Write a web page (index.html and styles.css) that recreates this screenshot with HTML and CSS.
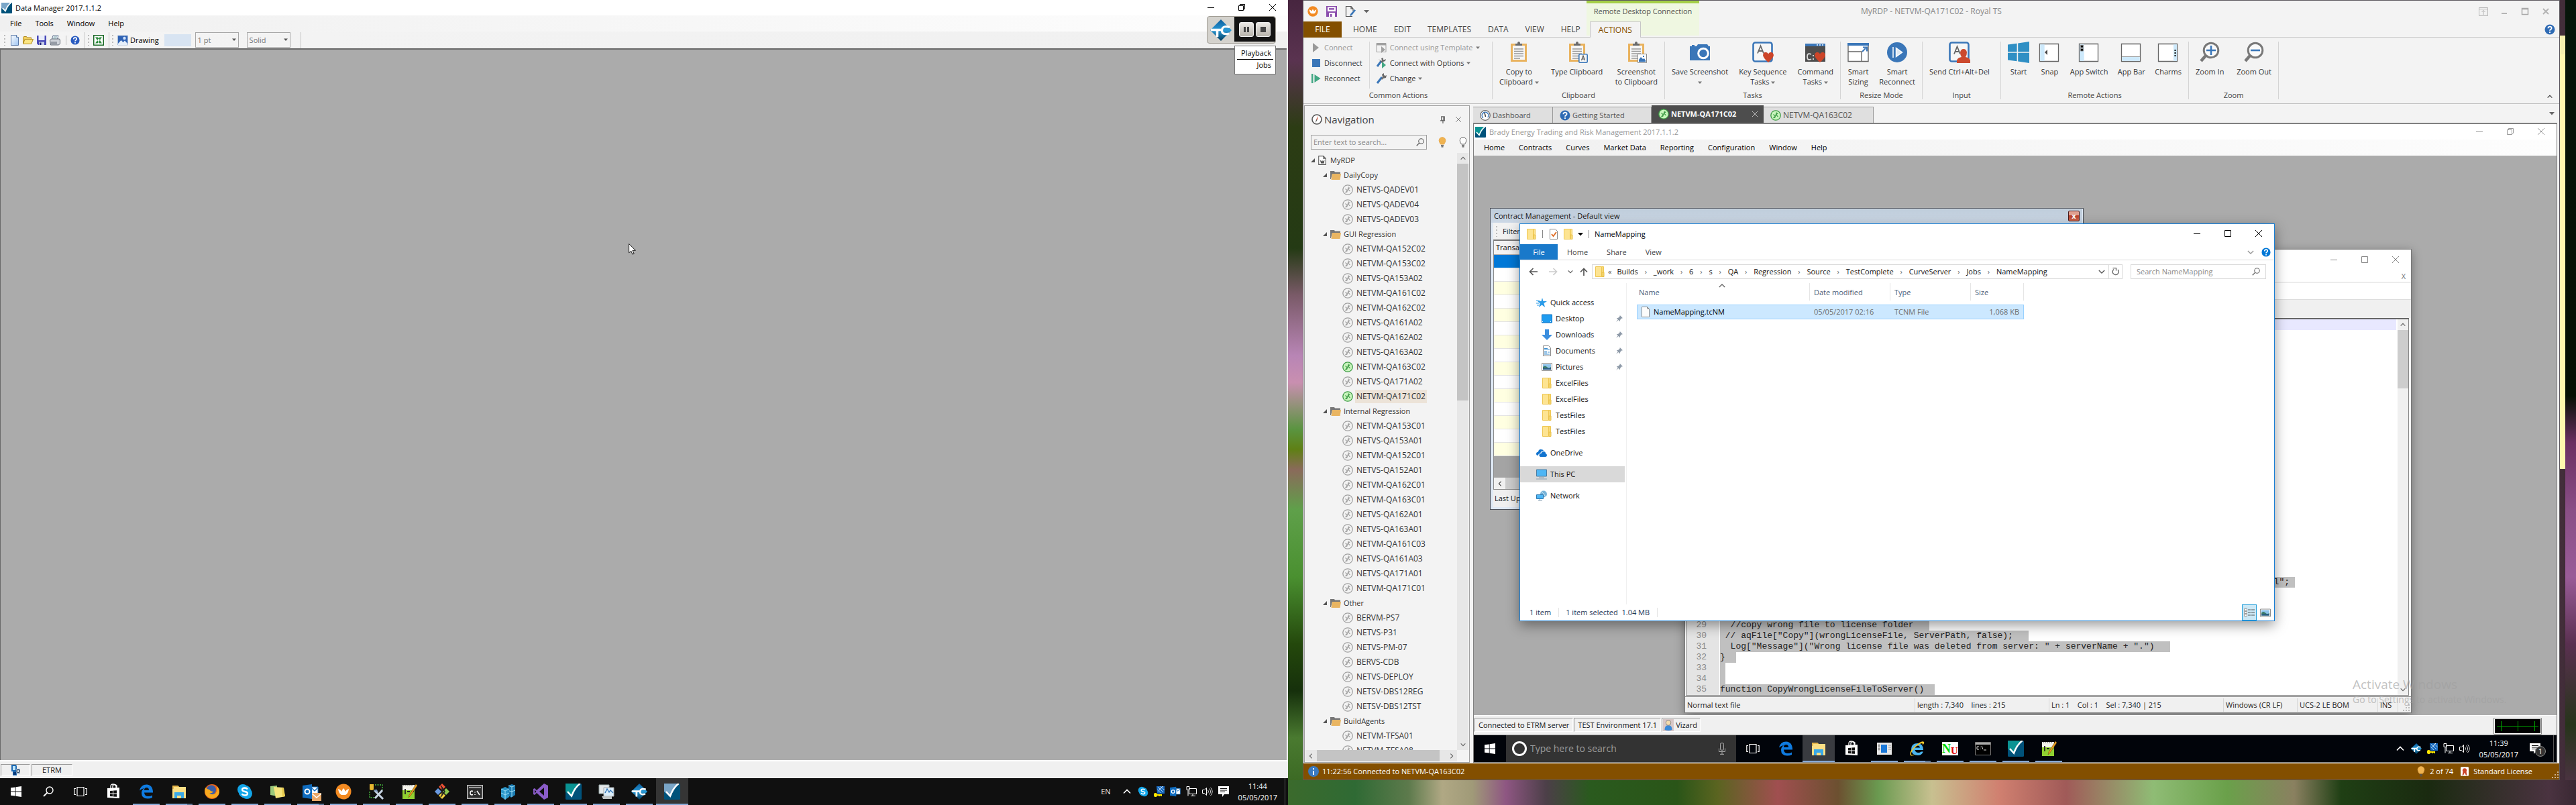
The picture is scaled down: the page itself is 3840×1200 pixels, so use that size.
FILE: index.html
```html
<!DOCTYPE html>
<html lang="en">
<head>
<meta charset="utf-8">
<title>Desktop</title>
<link rel="stylesheet" href="styles.css">
</head>
<body>
<svg class="defs" aria-hidden="true">
  <linearGradient id="g-blue" x1="0" y1="0" x2="1" y2="1"><stop offset="0" stop-color="#fff"/><stop offset="1" stop-color="#9cc3f0"/></linearGradient>
  <linearGradient id="g-tc" x1="0" y1="0" x2="0" y2="1"><stop offset="0" stop-color="#0a5c9c"/><stop offset=".5" stop-color="#2a9ad6"/><stop offset="1" stop-color="#013a5c"/></linearGradient>
  <symbol id="brady" viewBox="0 0 16 16"><rect width="16" height="16" rx="1" fill="#00527a"/><path d="M0 0h14Q9 7 7 12L5.500 13 0 8z" fill="currentColor"/><path d="M2 8l4 4.500Q9 4 14.500 0" fill="none" stroke="#fff" stroke-width="1.600"/></symbol>
  <symbol id="min" viewBox="0 0 10 10"><path d="M0 5.500h10" stroke="currentColor"/></symbol>
  <symbol id="max" viewBox="0 0 10 10"><path d="M.5.500h9v9h-9z" fill="none" stroke="currentColor"/></symbol>
  <symbol id="restore" viewBox="0 0 10 10"><path d="M.5 2.500h7v7h-7zM2.500 2.500v-2h7v7h-2" fill="none" stroke="currentColor"/></symbol>
  <symbol id="close" viewBox="0 0 10 10"><path d="M0 0l10 10M10 0L0 10" stroke="currentColor" fill="none"/></symbol>
  <symbol id="new" viewBox="0 0 16 16"><path d="M2.500.500h8l3 3v12h-11z" fill="url(#g-blue)" stroke="#5878a8"/><path d="M10.500.500v3h3" fill="#fff" stroke="#5878a8"/></symbol>
  <symbol id="open" viewBox="0 0 16 16"><path d="M.5 12.500v-9l1-1h4l1 1.500h6v3" fill="#f2d060" stroke="#b08a20"/><path d="M.5 13.500l2.500-7h12.500l-3 7z" fill="#fbe684" stroke="#b08a20"/></symbol>
  <symbol id="save" viewBox="0 0 16 16"><path d="M1 1h14v14H3l-2-2z" fill="#4a4ab8"/><path d="M3.500 1h9v7h-9z" fill="#e8ecfa"/><path d="M4 10.500h8V15H4z" fill="#c8d0e8"/><path d="M5 11.500h2.500V15H5z" fill="#282878"/></symbol>
  <symbol id="print" viewBox="0 0 16 16"><path d="M5 1h8l-2 7H3z" fill="#e8f0fa" stroke="#6a7a94"/><path d="M.5 8l2-2h12l1 2v5l-2 2h-12z" fill="#d0d4da" stroke="#5c6470"/><path d="M2 11h9M2 13h9" stroke="#5c6470"/><path d="M6 3h5M5 5h5" stroke="#8aa"/></symbol>
  <symbol id="help" viewBox="0 0 16 16"><circle cx="8" cy="8" r="7.500" fill="currentColor"/><path d="M5.400 6.200Q5.400 3.600 8 3.600t2.600 2.300Q10.600 7.200 9 8q-1 .6-1 1.800" fill="none" stroke="#fff" stroke-width="1.800"/><circle cx="8" cy="12.200" r="1.100" fill="#fff"/></symbol>
  <symbol id="excel" viewBox="0 0 16 16"><path d="M.75.750h14.500v14.500H.750z" fill="#fff" stroke="#1c6a28" stroke-width="1.500"/><path d="M3 3.500h4l6 9H9zM13 3.500H9.500l-6.500 9h3.500z" fill="#2a8a3a"/></symbol>
  <symbol id="picture" viewBox="0 0 16 16"><path d="M.5 1h15v14H.500z" fill="#2f62b4" stroke="#a8bcd8"/><circle cx="10.500" cy="5" r="2.200" fill="#cfe2fb"/><path d="M1 13l4.500-5 3 3 2.500-2.500L15 13v2H1z" fill="#e6effa"/></symbol>
  <symbol id="tc" viewBox="0 0 32 32"><path d="M16 0l16 16-16 16L0 16z" fill="url(#g-tc)"/><path d="M1 15.500h15.500M10.500 15.500V26" fill="none" stroke="#fff" stroke-width="3.600"/><path d="M29 11.500Q18 8.500 17.500 16T28 21" fill="none" stroke="#fff" stroke-width="3.200"/></symbol>
  <symbol id="win" viewBox="0 0 16 16"><path d="M0 2.300l6.800-.9v6.200H0zM7.600 1.300L16 0v7.600H7.600zM0 8.400h6.800v6.200L0 13.700zM7.600 8.400H16V16l-8.400-1.300z" fill="currentColor"/></symbol>
  <symbol id="lens" viewBox="0 0 16 16"><circle cx="10" cy="6" r="5" fill="none" stroke="currentColor" stroke-width="1.400"/><path d="M6.500 9.500L1 15" stroke="currentColor" stroke-width="1.800"/></symbol>
  <symbol id="taskview" viewBox="0 0 20 16"><path d="M5 1.500h10v13H5zM3 3.500H.800v9H3M17 3.500h2.200v9H17" fill="none" stroke="#fff" stroke-width="1.200"/></symbol>
  <symbol id="store" viewBox="0 0 24 24"><path d="M3 7l18-1v16L3 21z" fill="#fff"/><path d="M8 7V4q0-3 3.500-3T16 4v3M11 7V3q3-3 6 0v3" fill="none" stroke="#fff" stroke-width="1.300"/><path d="M7 11l4-.3v3.800H7zM12 10.600l5-.4v4.300h-5zM7 15.500h4v3.800l-4-.3zM12 15.500h5v4.300l-5-.4z" fill="#101010"/></symbol>
  <symbol id="edge" viewBox="0 0 24 24"><path d="M2 10.500Q4 1.500 12.500 1.500 22 2 22 13.500H9q.5 5.500 6 5.500 3.500 0 6-1.500V21q-3 1.500-7 1.500Q5 22.500 5 14q0-4.500 4-7Q5 7.500 2 10.500zM9 10h7q0-4-3.500-4T9 10z" fill="#0f7be0"/></symbol>
  <symbol id="explorer" viewBox="0 0 24 24"><path d="M2 3h8l2 2h10v17H2z" fill="#fbdf85"/><path d="M2 3h8l2 2H4v3H2z" fill="#e8b84a"/><path d="M5 13h14v9h-4v-4H9v4H5z" fill="#3aa9e8"/></symbol>
  <symbol id="firefox" viewBox="0 0 24 24"><circle cx="12" cy="12" r="11" fill="#e8641c"/><circle cx="11" cy="9.500" r="7" fill="#3a5ea8"/><path d="M2 6q-3 14 9 16 10 0 12-9 0-6-4-9 2 7-2 11-5 3-9-1 4 1 6-2-4 0-6-3Q6 9 2 6z" fill="#f8a91e"/></symbol>
  <symbol id="skype" viewBox="0 0 24 24"><circle cx="9" cy="9" r="8" fill="#12a5e8"/><circle cx="15" cy="15" r="8" fill="#12a5e8"/><circle cx="12" cy="12" r="9.500" fill="#12a5e8"/><path d="M16 8.500Q14.500 6.500 12 6.500q-4 0-4 2.700 0 2 4 2.800t4 2.700q0 2.800-4 2.800-3 0-4.500-2.200" fill="none" stroke="#fff" stroke-width="2.300"/></symbol>
  <symbol id="notes" viewBox="0 0 24 24"><path d="M1 4l10-1v16L1 17z" fill="#9cc87a"/><path d="M6 5l14 1 3 13-14 3z" fill="#f6e47c"/><path d="M18 7l3-1 2 13-4 1z" fill="#e8cc50"/></symbol>
  <symbol id="outlook" viewBox="0 0 24 24"><path d="M13 5h10v13H13z" fill="#fff" stroke="#0f6cbf"/><path d="M13 6l5 5 5-5" fill="none" stroke="#0f6cbf" stroke-width="1.500"/><path d="M0 3l14-2v22L0 21z" fill="#0f6cbf"/><circle cx="7" cy="12" r="3.500" fill="none" stroke="#fff" stroke-width="2"/></symbol>
  <symbol id="mail" viewBox="0 0 14 12"><path d="M0 0h14v12H0z" fill="#e9a868"/><path d="M0 1l7 6 7-6" fill="none" stroke="#fff" stroke-width="1.500"/></symbol>
  <symbol id="royal" viewBox="0 0 24 24"><circle cx="12" cy="12" r="11.500" fill="#f28a22"/><path d="M4 8q4 1 5 4 1-3 3-5 2 2 3 5 1-3 5-4-1 7-5 9H9Q5 15 4 8z" fill="#fff"/></symbol>
  <symbol id="tools" viewBox="0 0 24 24"><path d="M2 1h6v8q-3 2-6 0z" fill="#e8b830"/><path d="M10 2h11v8M2 12v9h8" fill="none" stroke="#4ac040" stroke-dasharray="2 1.500" stroke-width="1.300"/><path d="M9 10l13 13M21 10L10 22" stroke="#c8d4e4" stroke-width="3"/><path d="M9 11l3-1 2 3" fill="none" stroke="#7d95b8" stroke-width="2"/></symbol>
  <symbol id="npp" viewBox="0 0 24 24"><path d="M2 2h18v21H2z" fill="#f4f4ec"/><path d="M2 10h18v13H2z" fill="#8fd030"/><path d="M4 2v2M7 2v2M10 2v2M13 2v2M16 2v2" stroke="#666"/><path d="M6 8v8M9 12h4M15 12h4" stroke="#222" stroke-width="1.800"/><path d="M22 1L12 17l-1 4 3-3L24 3z" fill="#f0a020" stroke="#6a4a10" stroke-width=".6"/></symbol>
  <symbol id="git" viewBox="0 0 24 24"><path d="M12 0l5 5-5 5-5-5z" fill="#f05133"/><path d="M6 7l5 5-5 5-5-5z" fill="#6a9ae0"/><path d="M18 7l5 5-5 5-5-5z" fill="#8cc850"/><path d="M12 13l5 5-5 5-5-5z" fill="#f0d040"/><path d="M10 3l6 9-6 8M12 5v13" fill="none" stroke="#222" stroke-width="1.500"/></symbol>
  <symbol id="cmdbox" viewBox="0 0 24 24"><path d="M.75 2.750h22.500v19.500H.750z" fill="#2d2d2d" stroke="#bbb" stroke-width="1.500"/><path d="M3 6h18" stroke="#bbb" stroke-width="1.500"/><path d="M9 11.500q-4-1.500-4 2.500t4 2.500M12 12.500v1M12 16v1M15 11l4 6" fill="none" stroke="#fff" stroke-width="1.600"/></symbol>
  <symbol id="cmd" viewBox="0 0 24 20"><path d="M.5.500h23v19H.500z" fill="#000" stroke="#777"/><path d="M1 1h22v3H1z" fill="#aaa"/><path d="M6 7H3v4h3M8 7v1M8 10v1M10 6l2 5M13 12h4" fill="none" stroke="#ddd"/></symbol>
  <symbol id="cubes" viewBox="0 0 24 24"><path d="M2 8l6-3 6 3v12l-6 4-6-4z" fill="#2a96c8"/><path d="M13 3l5-2 5 2v14l-6 4-4-3z" fill="#1a7ab0"/><path d="M2 8l6 3 6-3M8 11v13M2 14l6 3 6-3M13 3l5 2 5-2M18 5v15M14 11l4 1 5-2" fill="none" stroke="#9fe0f8"/></symbol>
  <symbol id="vs" viewBox="0 0 24 24"><path d="M17 0l6 3v18l-6 3L6 14l-3 3-2-1V8l2-1 3 3zM17 6l-7 6 7 6zM3 9.500v5L5.500 12z" fill="#8a5cc8" fill-rule="evenodd"/></symbol>
  <symbol id="monitor" viewBox="0 0 24 24"><path d="M1 2h15v13H1z" fill="#e4e8ea" stroke="#9aa"/><path d="M8 6h15v13H8z" fill="#dceefa" stroke="#aaa"/><path d="M10 14l3-6 3 5 2-3 4 4" fill="none" stroke="#3a7ab8" stroke-width="1.400"/><path d="M5 19h15v4H7z" fill="#c0c4c4"/></symbol>
  <symbol id="up" viewBox="0 0 12 12"><path d="M1 8.500l5-5 5 5" fill="none" stroke="currentColor" stroke-width="1.600"/></symbol>
  <symbol id="down" viewBox="0 0 12 12"><path d="M1 3.500l5 5 5-5" fill="none" stroke="currentColor" stroke-width="1.600"/></symbol>
  <symbol id="left" viewBox="0 0 12 12"><path d="M8.500 1l-5 5 5 5" fill="none" stroke="currentColor" stroke-width="1.600"/></symbol>
  <symbol id="right" viewBox="0 0 12 12"><path d="M3.500 1l5 5-5 5" fill="none" stroke="currentColor" stroke-width="1.600"/></symbol>
  <symbol id="tri" viewBox="0 0 8 8"><path d="M0 2h8L4 6.500z" fill="currentColor"/></symbol>
  <symbol id="corner" viewBox="0 0 8 8"><path d="M7 1v6H1z" fill="currentColor"/></symbol>
  <symbol id="key" viewBox="0 0 16 16"><path d="M4 0h12v11H5z" fill="#1a6ac0"/><path d="M6 1l8 8M10 0l6 6M5 5l5 5" stroke="#9fd0f0"/><path d="M8 6q2-3 5-6" stroke="#fff" fill="none"/><path d="M0 13a2.500 2.500 0 015-1h7v3h-2v-1H9v1H7v-1H5a2.500 2.500 0 01-5-1z" fill="#ffe600"/></symbol>
  <symbol id="net" viewBox="0 0 16 16"><path d="M4.500 3.500h11v8h-11zM10 11.500v3M7 14.500h7M1 .5h4v5H1zM3 5.500v9" fill="none" stroke="#fff"/></symbol>
  <symbol id="sound" viewBox="0 0 16 16"><path d="M.5 5.500h3l3-3v11l-3-3h-3z" fill="none" stroke="#fff"/><path d="M8.500 5.500q2 2.500 0 5M10.500 3.500q4 4.500 0 9M12.500 2q5.500 6 0 12" fill="none" stroke="#ddd"/></symbol>
  <symbol id="notif" viewBox="0 0 16 16"><path d="M0 0h16v12H9l-3 4v-4H0z" fill="#fff"/><path d="M3 3.500h10M3 6h10M3 8.500h7" stroke="#101010" stroke-width="1.200"/></symbol>
  <symbol id="floppy" viewBox="0 0 16 16"><path d="M0 0h16v16H0z" fill="#8b4fad"/><path d="M2 1.500h12V8H2z" fill="#fff"/><path d="M4 3.500h8M4 5.500h8" stroke="#8b4fad"/><path d="M4 10h9v6H4z" fill="#fff"/><path d="M6 12h2.500v4H6z" fill="#8b4fad"/></symbol>
  <symbol id="docedit" viewBox="0 0 16 16"><path d="M9 .5H1.500v15H11M9 .5l3 3.500v3M9 .500V4h3" fill="none" stroke="#555" stroke-width="1.200"/><path d="M14 5l2 1.500-6 7.500-3 1 1-3z" fill="#3a76b8"/></symbol>
  <symbol id="play" viewBox="0 0 14 14"><path d="M2 0l9 7-9 7z" fill="currentColor"/></symbol>
  <symbol id="replay" viewBox="0 0 14 14"><path d="M0 0h2.500v14H0zM4.500 1l9 6-9 6z" fill="#42a783"/></symbol>
  <symbol id="square" viewBox="0 0 14 14"><path d="M1 1h12v12H1z" fill="#3a76b8"/></symbol>
  <symbol id="tmpl" viewBox="0 0 16 16"><path d="M1 1.500h14v13H1z" fill="none" stroke="#a0a0a0"/><path d="M1 1h14v3.500H1zM8 6l6 5-6 5z" fill="#a0a0a0"/></symbol>
  <symbol id="wrench" viewBox="0 0 16 16"><path d="M2 15L9 6" stroke="#3a76b8" stroke-width="3"/><path d="M8 8l2-2-1-4 3-2v3l2 1 2-1-1 4-4 1-2 2z" fill="#6a6a6a"/></symbol>
  <symbol id="wrenchplay" viewBox="0 0 16 16"><path d="M2 13L8 5" stroke="#3a76b8" stroke-width="3"/><path d="M7 6l2-2-1-3 3-1v3h2l2-1-1 3-3 1-2 2zM4 2l8 6-2 1z" fill="#6a6a6a"/><path d="M9 6l6 5-6 5z" fill="#42a783"/></symbol>
  <symbol id="clip" viewBox="0 0 32 32"><path d="M5.500 4.500h21v24h-21z" fill="#f6f6f6" stroke="#e9b35f" stroke-width="3"/><path d="M11 6V3h3q0-3 2-3t2 3h3v3z" fill="#6a6a6a"/><path d="M9 11h14M9 14.500h14M9 18h14M9 21.500h14M9 25h9" stroke="#999" stroke-width="1.300"/></symbol>
  <symbol id="clipa" viewBox="0 0 32 32"><use href="#clip"/><rect x="18.800" y="18.800" width="12.400" height="12.400" rx="1.500" fill="#f6f6f6" stroke="#3a76b8" stroke-width="1.600"/><path d="M22.500 28l2.500-7 2.500 7M23.500 26h3" fill="none" stroke="#555" stroke-width="1.200"/></symbol>
  <symbol id="clipp" viewBox="0 0 32 32"><use href="#clip"/><path d="M18.500 18.500h13v13h-13z" fill="#fff" stroke="#888"/><path d="M20 30v-3l3-4 3 3 2-1 2 3v2z" fill="#3a76b8"/><path d="M26 21h2v2h-2z" fill="#3a76b8"/></symbol>
  <symbol id="camera" viewBox="0 0 32 32"><path d="M1 7h3V5h4v2h3l2-3h14l2 3h2v21H1z" fill="#3a76b8"/><circle cx="21" cy="17.500" r="7.300" fill="none" stroke="#fff" stroke-width="3"/><circle cx="21" cy="17.500" r="5" fill="#3a76b8"/></symbol>
  <symbol id="heart" viewBox="0 0 16 15"><path d="M8 15Q0 8 0 4 1-1 5 0q2 0 3 2.500Q9 0 11 0q4-1 5 4 0 4-8 11z" fill="#cc4428"/></symbol>
  <symbol id="keyseq" viewBox="0 0 32 32"><rect x="1.500" y="1.500" width="28" height="28" rx="3" fill="#f6f6f6" stroke="#3a76b8" stroke-width="2.600"/><path d="M8 17.500L12.500 6.500 17 17.500M9.500 14h6" fill="none" stroke="#666" stroke-width="1.800"/><use href="#heart" x="16" y="16" width="16" height="15"/></symbol>
  <symbol id="cmdtask" viewBox="0 0 32 32"><path d="M1 3h30v27H1z" fill="#4d4d4d"/><path d="M1 3h30v4H1z" fill="#3a76b8"/><path d="M18 5h2M22 5h2M26 5h2" stroke="#fff" stroke-width="1.600"/><path d="M10 19q-6-3-6 3.500t6 3.500M13 20v2M13 25v2" fill="none" stroke="#ddd" stroke-width="1.800"/><use href="#heart" x="15" y="16" width="16" height="15"/></symbol>
  <symbol id="sizing" viewBox="0 0 32 32"><path d="M1 3.500h30v26H1z" fill="#fff" stroke="#666" stroke-width="1.400"/><path d="M0 2h32v4H0z" fill="#3a76b8"/><path d="M1 15h20v14" fill="none" stroke="#666" stroke-width="1.400"/><path d="M22 15l5-5M23 8.500h6v6" fill="none" stroke="#3a76b8" stroke-width="2"/></symbol>
  <symbol id="reconn" viewBox="0 0 32 32"><circle cx="16" cy="16" r="15" fill="#3a76b8"/><path d="M10 8v16M14.500 9.500l9 6.500-9 6.500z" fill="#dfe8f2" stroke="#fff" stroke-width="1.500"/></symbol>
  <symbol id="cad" viewBox="0 0 32 32"><rect x="1.500" y="1.500" width="28" height="28" rx="3" fill="#f6f6f6" stroke="#3a76b8" stroke-width="2.600"/><path d="M8 18.500L12.500 7.500 17 18.500M9.500 15h6" fill="none" stroke="#666" stroke-width="1.800"/><path d="M12 32v-4q1-4 7-5-2-3-2-7 1-5 5-5t5 5q0 4-2 7 6 1 7 5v4z" fill="#cc4a2e"/></symbol>
  <symbol id="snap" viewBox="0 0 32 32"><path d="M1.500 3.500h28v26h-28z" fill="#fff" stroke="#666" stroke-width="1.300"/><path d="M2.200 4.200h6.500v24.600H2.200z" fill="#cde9fb"/><path d="M13 12v8l-4-4z" fill="#444"/></symbol>
  <symbol id="appsw" viewBox="0 0 32 32"><path d="M1.500 3.500h28v26h-28z" fill="#fff" stroke="#666" stroke-width="1.300"/><path d="M2.200 4.200h6.500v24.600H2.200z" fill="#cde9fb"/><path d="M3.500 5.500h4v3.500h-4zM3.500 10.500h4V14h-4z" fill="#000" stroke="#888"/></symbol>
  <symbol id="appbar" viewBox="0 0 32 32"><path d="M1.500 3.500h28v26h-28z" fill="#fff" stroke="#666" stroke-width="1.300"/><path d="M2.200 22.500h26.600v6.300H2.200z" fill="#cde9fb"/><path d="M2 22.500h27" stroke="#999"/></symbol>
  <symbol id="charms" viewBox="0 0 32 32"><path d="M1.500 3.500h28v26h-28z" fill="#fff" stroke="#666" stroke-width="1.300"/><path d="M24 4.200h5v24.600h-5z" fill="#cde9fb"/><path d="M26.500 12v2M26.500 16v2M26.500 20v2" stroke="#000" stroke-width="2"/></symbol>
  <symbol id="zin" viewBox="0 0 32 32"><circle cx="18" cy="13" r="10.800" fill="#fafafa" stroke="#787878" stroke-width="3"/><path d="M10 21l-7 8" stroke="#787878" stroke-width="4.500"/><path d="M11 13h14M18 6v14" stroke="#3a76b8" stroke-width="2.600"/></symbol>
  <symbol id="zout" viewBox="0 0 32 32"><circle cx="18" cy="13" r="10.800" fill="#fafafa" stroke="#787878" stroke-width="3"/><path d="M10 21l-7 8" stroke="#787878" stroke-width="4.500"/><path d="M11 13h14" stroke="#3a76b8" stroke-width="2.600"/></symbol>
  <symbol id="compass" viewBox="0 0 16 16"><circle cx="8" cy="8" r="7" fill="#fff" stroke="#555" stroke-width="1.600"/><path d="M10 3L8.500 9 7 8z" fill="#cc4428"/><path d="M6 13l1-5 1.500 1z" fill="#555"/></symbol>
  <symbol id="gauge" viewBox="0 0 16 16"><circle cx="8" cy="8" r="7.300" fill="#fff" stroke="#666" stroke-width="1.200"/><circle cx="8" cy="8" r="4.800" fill="none" stroke="#3a76b8" stroke-width="1.500" stroke-dasharray="22 8" transform="rotate(130 8 8)"/><path d="M7 4l1.500 6" stroke="#333" stroke-width="1.400"/></symbol>
  <symbol id="pin" viewBox="0 0 10 12"><path d="M3 1h5v6H3zM1 7.500h8M5.500 8v4" fill="none" stroke="currentColor" stroke-width="1.400"/><path d="M6 1h2v6H6z" fill="currentColor"/></symbol>
  <symbol id="bulb" viewBox="0 0 12 16"><path d="M6 .7q4.800.3 4.800 5Q10.500 8 8.500 11h-5Q1.500 8 1.200 5.700 1.200 1 6 .7z" fill="var(--bulb)" stroke="var(--rim)"/><path d="M4 13h4M4.500 14.800h3" stroke="#555" stroke-width="1.300"/></symbol>
  <symbol id="royaldoc" viewBox="0 0 14 16"><path d="M1 .7h8l4 4v10.600H1zM9 .7v4h4" fill="#fff" stroke="#555" stroke-width="1.200"/><path d="M3 7l3 3 1-3 1 3 3-3-1 6H5z" fill="#555"/></symbol>
  <symbol id="folder" viewBox="0 0 16 14"><path d="M0 1h6l1 1.500h8V5H3L1 13H0z" fill="#767676"/><path d="M3 5h13l-1.500 9H1.500z" fill="#e9b562"/></symbol>
  <symbol id="rdp" viewBox="0 0 16 16"><circle cx="8" cy="8" r="7.200" fill="var(--fill)" stroke="currentColor" stroke-width="1.300"/><path d="M4.500 6.500l3 2.500-3 3M11.500 4.500l-3 2.500 3 3M9.500 3.500L6.500 12" fill="none" stroke="currentColor" stroke-width="1.100"/></symbol>
  <symbol id="yfolder" viewBox="0 0 14 16"><path d="M1 0h9v16H1z" fill="#fde492"/><path d="M.5.500h9v15h-9z" fill="#fde492" stroke="#eec651"/><path d="M10 9h3v6.500h-3z" fill="#f8dc78" stroke="#e8bd45"/><path d="M10 .500h2.500V9H10z" fill="#fde492" stroke="#eec651"/></symbol>
  <symbol id="docheck" viewBox="0 0 14 16"><path d="M1.500.500h8l3 3v12h-11z" fill="#fff" stroke="#888"/><path d="M4 8l2.500 3L11 5" fill="none" stroke="#e06a20" stroke-width="1.800"/></symbol>
  <symbol id="file" viewBox="0 0 12 16"><path d="M.5.500h8l3 3v12H.500z" fill="#fcfcfc" stroke="#8f8f8f"/><path d="M8.500.500v3h3" fill="none" stroke="#8f8f8f"/></symbol>
  <symbol id="arrowl" viewBox="0 0 14 12"><path d="M13 6H1.500M6.500 1l-5 5 5 5" fill="none" stroke="currentColor" stroke-width="1.700"/></symbol>
  <symbol id="arrowr" viewBox="0 0 14 12"><path d="M1 6h11.500M7.500 1l5 5-5 5" fill="none" stroke="currentColor" stroke-width="1.700"/></symbol>
  <symbol id="arrowu" viewBox="0 0 12 12"><path d="M6 12V1.500M1 6.500l5-5 5 5" fill="none" stroke="currentColor" stroke-width="1.700"/></symbol>
  <symbol id="refresh" viewBox="0 0 12 12"><path d="M3 2.500A4.500 4.500 0 109 3" fill="none" stroke="#666" stroke-width="1.400"/><path d="M1.500.500h5v4" fill="none" stroke="#666" stroke-width="1.300"/></symbol>
  <symbol id="star" viewBox="0 0 16 16"><path d="M9 1l1.500 5H16l-4.500 3 1.500 6-4.500-3.500L4 15l1.500-6L2 6h5.500z" fill="#2a9be8"/><path d="M0 5h5M0 9h4M1 12h3" stroke="#2a9be8"/></symbol>
  <symbol id="desk" viewBox="0 0 16 13"><path d="M.5.500h15v12H.500z" fill="#1f9cf0" stroke="#0a6fc0"/><path d="M1 11h14" stroke="#fff" stroke-dasharray="1 11"/></symbol>
  <symbol id="dl" viewBox="0 0 16 16"><path d="M5 0h6v8h5l-8 8-8-8h5z" fill="#3b8ede"/></symbol>
  <symbol id="docs" viewBox="0 0 14 16"><path d="M1.500.500h8l3 3v12h-11z" fill="#fff" stroke="#888"/><path d="M3 4.500h5M3 6.500h8M3 8.500h4M8 10h3M3 11h4M3 13h8" stroke="#3b8ed0"/></symbol>
  <symbol id="pics" viewBox="0 0 16 12"><path d="M.5.500h15v11H.500z" fill="#fff" stroke="#909090"/><path d="M2 2h12v8H2z" fill="#8fc4ec"/><path d="M2 6q3-3 6 0t6 0v4H2z" fill="#3a7a6a"/><path d="M2 8h12v2H2z" fill="#2a5a8a"/></symbol>
  <symbol id="tack" viewBox="0 0 12 12"><path d="M7 0l5 5-2 .5-2.500 2.500L7 11 4.500 8.500 0 12l3.500-4.500L1 5l3-.5L6.500 2z" fill="#8e9aa8"/></symbol>
  <symbol id="cloud" viewBox="0 0 16 12"><path d="M3 10Q0 10 0 7.500 0 5 3 4.500 4 0 8 1q2 0 3 2-4 0-5 4-3 0-3 3zM6 12q-2-1-1.500-3T7.500 7q.5-3 3.500-3t3 3q2 .5 2 2.500T14 12z" fill="#1173cf"/></symbol>
  <symbol id="pc" viewBox="0 0 16 15"><path d="M.5.500h15v10H.500z" fill="#4fb6f5" stroke="#4a7ea4"/><path d="M4 12.500h8M0 14.500h16" stroke="#8aa0b4"/></symbol>
  <symbol id="server" viewBox="0 0 16 16"><path d="M2 0h7l1 2v14H4V10H2z" fill="#1c6ab4"/><path d="M4 2h4v6H4z" fill="#bfe4f8"/><path d="M9 6h6v7H9z" fill="#7a9cc0"/><circle cx="12" cy="9.500" r="2" fill="#e8f2fa" stroke="#234"/><path d="M5 11h4v4H5z" fill="#0a3a7a"/></symbol>
  <symbol id="netw" viewBox="0 0 16 16"><circle cx="11" cy="5.500" r="5" fill="#7ab4d8"/><path d="M8 2q4 3 6 8" stroke="#cfe6f4" fill="none"/><path d="M.5 6.500h10v6H.500z" fill="#4fb6f5" stroke="#2a78b0"/><path d="M3 15h6M5.500 13v2" stroke="#8aa0b4"/></symbol>
  <symbol id="details" viewBox="0 0 16 13"><path d="M.5.500h4v3h-4zM.5 4.500h4v3h-4zM.5 8.500h4v3h-4z" fill="#fff" stroke="#999"/><path d="M6 2h4M11 2h5M6 6h4M11 6h5M6 10h4M11 10h5" stroke="#555"/></symbol>
  <symbol id="ie" viewBox="0 0 24 24"><path d="M3 13Q3 4 12.500 4 21 4.500 21 14H8.500q1 4 5 4 3 0 4-1.500H21Q18.500 22 13 22 3.500 22 3 13zm5.500-2.500h7.500q-.5-3-3.500-3t-4 3z" fill="#4ab4f0"/><path d="M2 22Q-1 17 9 8T22 2Q23 4 20 7 21 3 17 4.500 10 8 5.500 14T4 21.500Q8 21 10 19 5 24 2 22z" fill="#f6c92c"/></symbol>
  <symbol id="app" viewBox="0 0 24 20"><path d="M1 1h22v18H1z" fill="#e8e8e8"/><path d="M7 4h9v12H7z" fill="#1a78d8"/><path d="M3 4h2v3H3zM3 9h2v3H3zM18 5h4M18 8h4M18 11h4" fill="#999" stroke="#999"/></symbol>
  <symbol id="mic" viewBox="0 0 12 18"><rect x="3.500" y=".7" width="5" height="10.500" rx="1.500" fill="none" stroke="currentColor"/><path d="M1.500 8.500v5h9v-5M6 13.500v4M3 17.300h6" fill="none" stroke="currentColor"/></symbol>
  <symbol id="user" viewBox="0 0 16 18"><path d="M0 0h16v18H0z" fill="#d8c8c8"/><path d="M2.500 16q0-7 5.500-7t5.500 7q-5 2-11 0z" fill="#3a8ad8"/><circle cx="8" cy="5.500" r="3.800" fill="#f4dcae" stroke="#888"/></symbol>
  <symbol id="license" viewBox="0 0 14 16"><rect width="14" height="16" rx="1.500" fill="#fff"/><circle cx="7" cy="6" r="3.600" fill="#cc4428"/><path d="M4 8l-1 7 2-1 2-4 2 4 2 1-1-7z" fill="#cc4428"/></symbol>
  <symbol id="info" viewBox="0 0 16 16"><circle cx="8" cy="8" r="8" fill="#3a7ac0"/><path d="M8 7v6M8 3v2.200" stroke="#fff" stroke-width="2"/></symbol>
  <symbol id="grip" viewBox="0 0 10 10"><path d="M8 0h2v2H8zM8 4h2v2H8zM8 8h2v2H8zM4 4h2v2H4zM4 8h2v2H4zM0 8h2v2H0z" fill="currentColor"/></symbol>
</svg>

<main class="desktop">
<section class="monitor primary">
  <header class="titlebar">
    <svg class="i16 sky"><use href="#brady"/></svg><h1>Data Manager 2017.1.1.2</h1>
    <div class="winbtns"><button aria-label="Minimize"><svg><use href="#min"/></svg></button><button aria-label="Restore"><svg><use href="#restore"/></svg></button><button aria-label="Close"><svg><use href="#close"/></svg></button></div>
  </header>
  <nav class="menu"><button>File</button><button>Tools</button><button>Window</button><button>Help</button></nav>
  <div class="toolbar">
    <i class="dots"></i>
    <button aria-label="New"><svg class="i16"><use href="#new"/></svg></button><button aria-label="Open"><svg class="i16"><use href="#open"/></svg></button><button aria-label="Save"><svg class="i16"><use href="#save"/></svg></button><button aria-label="Print"><svg class="i16"><use href="#print"/></svg></button>
    <i class="rule"></i><button aria-label="Help" class="royalblue"><svg class="i14"><use href="#help"/></svg></button><i class="rule tall"></i>
    <i class="dots"></i><button aria-label="Export to Excel"><svg class="i16"><use href="#excel"/></svg></button><i class="rule tall"></i>
    <i class="dots"></i><button class="draw"><svg class="i16"><use href="#picture"/></svg>Drawing</button>
    <span class="swatch"></span>
    <span class="combo"><select aria-label="Line width" disabled><option>1 pt</option></select><svg><use href="#tri"/></svg></span>
    <span class="combo"><select aria-label="Line style" disabled><option>Solid</option></select><svg><use href="#tri"/></svg></span>
    <i class="rule tall"></i>
  </div>
  <div class="workspace"></div>
  <footer class="dmstatus"><span class="cell"><svg class="i16"><use href="#server"/></svg></span><span class="cell">ETRM</span></footer>
  <div class="taskbar">
    <button aria-label="Start"><svg class="i16"><use href="#win"/></svg></button><button aria-label="Search"><svg class="i16"><use href="#lens"/></svg></button><button aria-label="Task View"><svg class="tv"><use href="#taskview"/></svg></button>
    <button aria-label="Store"><svg class="i24"><use href="#store"/></svg></button>
    <button class="run" aria-label="Edge"><svg class="i24"><use href="#edge"/></svg></button>
    <button class="run multi" aria-label="File Explorer"><svg class="i24"><use href="#explorer"/></svg></button>
    <button class="run" aria-label="Firefox"><svg class="i24"><use href="#firefox"/></svg></button>
    <button class="run" aria-label="Skype"><svg class="i24"><use href="#skype"/></svg></button>
    <button class="run" aria-label="Sticky Notes"><svg class="i24"><use href="#notes"/></svg></button>
    <button class="run multi" aria-label="Outlook"><svg class="i24"><use href="#outlook"/></svg><svg class="mailbadge"><use href="#mail"/></svg></button>
    <button class="run" aria-label="Royal TS"><svg class="i24"><use href="#royal"/></svg></button>
    <button class="run" aria-label="SQL Tools"><svg class="i24"><use href="#tools"/></svg></button>
    <button class="run" aria-label="Notepad++"><svg class="i24"><use href="#npp"/></svg></button>
    <button class="run" aria-label="Git"><svg class="i24"><use href="#git"/></svg></button>
    <button class="run" aria-label="Console"><svg class="i24"><use href="#cmdbox"/></svg></button>
    <button class="run" aria-label="Registry"><svg class="i24"><use href="#cubes"/></svg></button>
    <button class="run" aria-label="Visual Studio"><svg class="i24"><use href="#vs"/></svg></button>
    <button class="run teal" aria-label="Brady ETRM"><svg class="i24"><use href="#brady"/></svg></button>
    <button class="run" aria-label="Monitor"><svg class="i24"><use href="#monitor"/></svg></button>
    <button class="run" aria-label="TestComplete"><svg class="i24"><use href="#tc"/></svg></button>
    <button class="run active sky" aria-label="Data Manager"><svg class="i24"><use href="#brady"/></svg></button>
    <div class="tray">
      <span class="lang">EN</span><svg class="i16 caret"><use href="#up"/></svg><svg class="i16"><use href="#skype"/></svg><svg class="i16"><use href="#key"/></svg><svg class="i16"><use href="#outlook"/></svg><svg class="i16"><use href="#net"/></svg><svg class="i16"><use href="#sound"/></svg><svg class="i16"><use href="#notif"/></svg>
      <time class="clock">11:44<br>05/05/2017</time>
    </div>
  </div>
  <div class="playback">
    <span class="tclogo"><svg><use href="#tc"/></svg></span>
    <span class="deck"><button aria-label="Pause"><i class="pause"></i></button><button aria-label="Stop"><i class="stop"></i></button></span>
  </div>
  <div class="hint"><span>Playback</span><span>Jobs</span></div>
  <svg class="cursor" viewBox="0 0 12 19"><path d="M.5.500v15l3.500-3 2.500 5.500 2.500-1-2.500-5.500h5z" fill="#fff" stroke="#000"/></svg>
</section>

<section class="monitor secondary">
  <div class="note"></div>
  <div class="royal">
    <div class="context">Remote Desktop Connection</div>
    <header class="rtitle">
      <div class="qat"><svg class="i16"><use href="#royal"/></svg><button aria-label="Save"><svg class="i16"><use href="#floppy"/></svg></button><button aria-label="Edit"><svg class="i16"><use href="#docedit"/></svg></button><button aria-label="Customize"><svg class="i8"><use href="#tri"/></svg></button></div>
      <h2>MyRDP - NETVM-QA171C02 - Royal TS</h2>
      <div class="rbtns"><button aria-label="Ribbon options"><svg viewBox="0 0 14 14"><path d="M.5 1.500h13v12H.500zM.5 3.500h13M7 12V5.500M4.500 8L7 5.500 9.500 8" fill="none" stroke="#b4b4b4"/></svg></button><button aria-label="Minimize"><svg viewBox="0 0 14 14"><path d="M3 10h8" stroke="#b4b4b4" stroke-width="2"/></svg></button><button aria-label="Maximize"><svg viewBox="0 0 14 14"><path d="M2.500 2.500h9v9h-9zM2.500 3.500h9" fill="none" stroke="#a8a8a8" stroke-width="1.500"/></svg></button><button aria-label="Close"><svg viewBox="0 0 14 14"><path d="M3 3l8 8M11 3l-8 8" stroke="#b4b4b4" stroke-width="2"/></svg></button></div>
    </header>
    <nav class="rtabs"><button class="filetab">FILE</button><button>HOME</button><button>EDIT</button><button>TEMPLATES</button><button>DATA</button><button>VIEW</button><button>HELP</button><button class="on">ACTIONS</button><button class="rhelp" aria-label="Help"><svg class="i16"><use href="#help"/></svg></button></nav>
    <div class="ribbon">
      <div class="group g-common"><div class="cmds">
        <div class="stack"><button disabled><svg class="i14"><use href="#play"/></svg>Connect</button><button><svg class="i14"><use href="#square"/></svg>Disconnect</button><button><svg class="i14"><use href="#replay"/></svg>Reconnect</button></div>
        <div class="stack second"><button disabled><svg class="i16"><use href="#tmpl"/></svg>Connect using Template<svg class="dd"><use href="#tri"/></svg></button><button><svg class="i16"><use href="#wrenchplay"/></svg>Connect with Options<svg class="dd"><use href="#tri"/></svg></button><button><svg class="i16"><use href="#wrench"/></svg>Change<svg class="dd"><use href="#tri"/></svg></button></div>
      </div><span class="gname">Common Actions</span></div>
      <div class="group g-clip"><div class="cmds"><button class="big"><svg><use href="#clip"/></svg><span>Copy to<br>Clipboard <svg class="dd"><use href="#tri"/></svg></span></button><button class="big"><svg><use href="#clipa"/></svg><span>Type Clipboard</span></button><button class="big"><svg><use href="#clipp"/></svg><span>Screenshot<br>to Clipboard</span></button></div><span class="gname">Clipboard</span></div>
      <div class="group g-tasks"><div class="cmds"><button class="big"><svg><use href="#camera"/></svg><span>Save Screenshot<br><svg class="dd"><use href="#tri"/></svg></span></button><button class="big"><svg><use href="#keyseq"/></svg><span>Key Sequence<br>Tasks <svg class="dd"><use href="#tri"/></svg></span></button><button class="big"><svg><use href="#cmdtask"/></svg><span>Command<br>Tasks <svg class="dd"><use href="#tri"/></svg></span></button></div><span class="gname">Tasks</span></div>
      <div class="group g-resize"><div class="cmds"><button class="big"><svg><use href="#sizing"/></svg><span>Smart<br>Sizing</span></button><button class="big"><svg><use href="#reconn"/></svg><span>Smart<br>Reconnect</span></button></div><span class="gname">Resize Mode</span></div>
      <div class="group g-input"><div class="cmds"><button class="big"><svg><use href="#cad"/></svg><span>Send Ctrl+Alt+Del</span></button></div><span class="gname">Input</span></div>
      <div class="group g-remote"><div class="cmds"><button class="big start"><svg><use href="#win"/></svg><span>Start</span></button><button class="big"><svg><use href="#snap"/></svg><span>Snap</span></button><button class="big"><svg><use href="#appsw"/></svg><span>App Switch</span></button><button class="big"><svg><use href="#appbar"/></svg><span>App Bar</span></button><button class="big"><svg><use href="#charms"/></svg><span>Charms</span></button></div><span class="gname">Remote Actions</span></div>
      <div class="group g-zoom"><div class="cmds"><button class="big"><svg><use href="#zin"/></svg><span>Zoom In</span></button><button class="big"><svg><use href="#zout"/></svg><span>Zoom Out</span></button></div><span class="gname">Zoom</span></div>
      <button class="collapse" aria-label="Collapse ribbon"><svg class="i8"><use href="#up"/></svg></button>
    </div>
    <div class="rbody">
      <aside class="navpane">
        <div class="navhead"><svg class="i16"><use href="#compass"/></svg><h3>Navigation</h3><svg class="pin"><use href="#pin"/></svg><svg class="i8"><use href="#close"/></svg></div>
        <div class="navsearch"><label class="sbox"><input type="text" placeholder="Enter text to search..." aria-label="Search"><svg class="i12"><use href="#lens"/></svg></label><svg class="bulb lit"><use href="#bulb"/></svg><svg class="bulb"><use href="#bulb"/></svg></div>
        <div class="treewrap">
          <ul class="tree">
            <li class="root"><svg class="i8"><use href="#corner"/></svg><svg class="i14 ic"><use href="#royaldoc"/></svg>MyRDP</li>
            <li class="dir"><svg class="i8"><use href="#corner"/></svg><svg class="i16"><use href="#folder"/></svg>DailyCopy</li>
            <li class="host"><svg class="i16"><use href="#rdp"/></svg><span>NETVS-QADEV01</span></li>
            <li class="host"><svg class="i16"><use href="#rdp"/></svg><span>NETVS-QADEV04</span></li>
            <li class="host"><svg class="i16"><use href="#rdp"/></svg><span>NETVS-QADEV03</span></li>
            <li class="dir"><svg class="i8"><use href="#corner"/></svg><svg class="i16"><use href="#folder"/></svg>GUI Regression</li>
            <li class="host"><svg class="i16"><use href="#rdp"/></svg><span>NETVM-QA152C02</span></li>
            <li class="host"><svg class="i16"><use href="#rdp"/></svg><span>NETVM-QA153C02</span></li>
            <li class="host"><svg class="i16"><use href="#rdp"/></svg><span>NETVS-QA153A02</span></li>
            <li class="host"><svg class="i16"><use href="#rdp"/></svg><span>NETVM-QA161C02</span></li>
            <li class="host"><svg class="i16"><use href="#rdp"/></svg><span>NETVM-QA162C02</span></li>
            <li class="host"><svg class="i16"><use href="#rdp"/></svg><span>NETVS-QA161A02</span></li>
            <li class="host"><svg class="i16"><use href="#rdp"/></svg><span>NETVS-QA162A02</span></li>
            <li class="host"><svg class="i16"><use href="#rdp"/></svg><span>NETVS-QA163A02</span></li>
            <li class="host live"><svg class="i16"><use href="#rdp"/></svg><span>NETVM-QA163C02</span></li>
            <li class="host"><svg class="i16"><use href="#rdp"/></svg><span>NETVS-QA171A02</span></li>
            <li class="host live sel"><svg class="i16"><use href="#rdp"/></svg><span>NETVM-QA171C02</span></li>
            <li class="dir"><svg class="i8"><use href="#corner"/></svg><svg class="i16"><use href="#folder"/></svg>Internal Regression</li>
            <li class="host"><svg class="i16"><use href="#rdp"/></svg><span>NETVM-QA153C01</span></li>
            <li class="host"><svg class="i16"><use href="#rdp"/></svg><span>NETVS-QA153A01</span></li>
            <li class="host"><svg class="i16"><use href="#rdp"/></svg><span>NETVM-QA152C01</span></li>
            <li class="host"><svg class="i16"><use href="#rdp"/></svg><span>NETVS-QA152A01</span></li>
            <li class="host"><svg class="i16"><use href="#rdp"/></svg><span>NETVM-QA162C01</span></li>
            <li class="host"><svg class="i16"><use href="#rdp"/></svg><span>NETVM-QA163C01</span></li>
            <li class="host"><svg class="i16"><use href="#rdp"/></svg><span>NETVS-QA162A01</span></li>
            <li class="host"><svg class="i16"><use href="#rdp"/></svg><span>NETVS-QA163A01</span></li>
            <li class="host"><svg class="i16"><use href="#rdp"/></svg><span>NETVM-QA161C03</span></li>
            <li class="host"><svg class="i16"><use href="#rdp"/></svg><span>NETVS-QA161A03</span></li>
            <li class="host"><svg class="i16"><use href="#rdp"/></svg><span>NETVS-QA171A01</span></li>
            <li class="host"><svg class="i16"><use href="#rdp"/></svg><span>NETVM-QA171C01</span></li>
            <li class="dir"><svg class="i8"><use href="#corner"/></svg><svg class="i16"><use href="#folder"/></svg>Other</li>
            <li class="host"><svg class="i16"><use href="#rdp"/></svg><span>BERVM-PS7</span></li>
            <li class="host"><svg class="i16"><use href="#rdp"/></svg><span>NETVS-P31</span></li>
            <li class="host"><svg class="i16"><use href="#rdp"/></svg><span>NETVS-PM-07</span></li>
            <li class="host"><svg class="i16"><use href="#rdp"/></svg><span>BERVS-CDB</span></li>
            <li class="host"><svg class="i16"><use href="#rdp"/></svg><span>NETVS-DEPLOY</span></li>
            <li class="host"><svg class="i16"><use href="#rdp"/></svg><span>NETSV-DBS12REG</span></li>
            <li class="host"><svg class="i16"><use href="#rdp"/></svg><span>NETSV-DBS12TST</span></li>
            <li class="dir"><svg class="i8"><use href="#corner"/></svg><svg class="i16"><use href="#folder"/></svg>BuildAgents</li>
            <li class="host"><svg class="i16"><use href="#rdp"/></svg><span>NETVM-TFSA01</span></li>
            <li class="host"><svg class="i16"><use href="#rdp"/></svg><span>NETVM-TFSA08</span></li>
          </ul>
          <div class="vscroll"><svg class="i8"><use href="#up"/></svg><i></i><svg class="i8"><use href="#down"/></svg></div>
        </div>
        <div class="hscroll"><svg class="i8"><use href="#left"/></svg><i></i><svg class="i8"><use href="#right"/></svg></div>
      </aside>
      <div class="session">
        <div class="doctabs">
          <button class="t-dash"><svg class="i16"><use href="#gauge"/></svg>Dashboard</button><button class="t-start"><svg class="i16"><use href="#help"/></svg>Getting Started</button><button class="t-on live"><svg class="i16"><use href="#rdp"/></svg>NETVM-QA171C02<svg class="i8 x"><use href="#close"/></svg></button><button class="t-last live"><svg class="i16"><use href="#rdp"/></svg>NETVM-QA163C02</button><svg class="i8 more"><use href="#tri"/></svg>
        </div>
        <div class="rdp">
          <header class="titlebar dim"><svg class="i16 teal"><use href="#brady"/></svg><h2>Brady Energy Trading and Risk Management 2017.1.1.2</h2>
            <div class="winbtns"><button aria-label="Minimize"><svg><use href="#min"/></svg></button><button aria-label="Restore"><svg><use href="#restore"/></svg></button><button aria-label="Close"><svg><use href="#close"/></svg></button></div></header>
          <nav class="menu"><button>Home</button><button>Contracts</button><button>Curves</button><button>Market Data</button><button>Reporting</button><button>Configuration</button><button>Window</button><button>Help</button></nav>
          <div class="mdi">
            <div class="contracts">
              <header><span>Contract Management - Default view</span><button aria-label="Close">x</button></header>
              <div class="filter"><i class="dots"></i>Filter</div>
              <div class="gridbox">
                <table class="deals"><thead><tr><th>Transaction</th></tr></thead><tbody><tr class="hot"><td></td></tr><tr><td></td></tr><tr><td></td></tr><tr><td></td></tr><tr><td></td></tr><tr><td></td></tr><tr><td></td></tr><tr><td></td></tr><tr><td></td></tr><tr><td></td></tr><tr><td></td></tr><tr><td></td></tr><tr><td></td></tr><tr><td></td></tr><tr><td></td></tr></tbody></table>
                <div class="dealscroll"><svg class="i8"><use href="#left"/></svg><i></i></div>
              </div>
              <footer>Last Updated</footer>
            </div>
            <div class="notepad">
              <header><div class="winbtns"><button aria-label="Minimize"><svg><use href="#min"/></svg></button><button aria-label="Maximize"><svg><use href="#max"/></svg></button><button aria-label="Close"><svg><use href="#close"/></svg></button></div></header>
              <div class="npmenu">X</div><div class="npbar"></div><div class="nptabs"></div>
              <div class="editor">
                <div class="code">
                  <div class="current"></div>
                  <ol start="25">
                    <li><b>25</b><code class="long">l";</code></li>
                    <li><b>26</b></li><li><b>27</b></li><li><b>28</b></li>
                    <li><b>29</b><code>  //copy wrong file to license folder  </code></li>
                    <li><b>30</b><code> // aqFile["Copy"](wrongLicenseFile, ServerPath, false);  </code></li>
                    <li><b>31</b><code>  Log["Message"]("Wrong license file was deleted from server: " + serverName + ".")  </code></li>
                    <li><b>32</b><code>} </code></li>
                    <li><b>33</b><code class="blank"></code></li>
                    <li><b>34</b><code class="blank"></code></li>
                    <li><b>35</b><code>function CopyWrongLicenseFileToServer() </code></li>
                  </ol>
                </div>
                <div class="vscroll"><svg class="i8"><use href="#up"/></svg><i></i><svg class="i8"><use href="#down"/></svg></div>
              </div>
              <footer><span class="f-type">Normal text file</span><span class="f-len">length : 7,340    lines : 215</span><span class="f-pos">Ln : 1    Col : 1    Sel : 7,340 | 215</span><span class="f-eol">Windows (CR LF)</span><span class="f-enc">UCS-2 LE BOM</span><span class="f-ins">INS</span><svg class="i10"><use href="#grip"/></svg></footer>
            </div>
            <div class="explorer">
              <header class="extitle"><svg class="i16"><use href="#yfolder"/></svg><i></i><svg class="i16"><use href="#docheck"/></svg><svg class="i16"><use href="#yfolder"/></svg><svg class="i8"><use href="#tri"/></svg><i></i><span>NameMapping</span>
                <div class="winbtns"><button aria-label="Minimize"><svg><use href="#min"/></svg></button><button aria-label="Maximize"><svg><use href="#max"/></svg></button><button aria-label="Close"><svg><use href="#close"/></svg></button></div></header>
              <nav class="extabs"><button class="filetab">File</button><button>Home</button><button>Share</button><button>View</button><span class="exhelp"><svg class="i10"><use href="#down"/></svg><svg class="i14 q"><use href="#help"/></svg></span></nav>
              <div class="exaddr">
                <button aria-label="Back"><svg class="arr"><use href="#arrowl"/></svg></button><button class="off" aria-label="Forward"><svg class="arr"><use href="#arrowr"/></svg></button><button class="small" aria-label="Recent"><svg class="i8"><use href="#down"/></svg></button><button aria-label="Up"><svg class="i12"><use href="#arrowu"/></svg></button>
                <div class="path"><svg class="i16"><use href="#yfolder"/></svg><span>«</span><a href="#b">Builds</a><a href="#w">_work</a><a href="#6">6</a><a href="#s">s</a><a href="#qa">QA</a><a href="#r">Regression</a><a href="#src">Source</a><a href="#tcp">TestComplete</a><a href="#cs">CurveServer</a><a href="#j">Jobs</a><a href="#nm">NameMapping</a><svg class="i10 pd"><use href="#down"/></svg><button aria-label="Refresh"><svg class="i12"><use href="#refresh"/></svg></button></div>
                <label class="find"><input type="text" placeholder="Search NameMapping" aria-label="Search NameMapping"><svg class="i12"><use href="#lens"/></svg></label>
              </div>
              <div class="exbody">
                <ul class="places">
                  <li><svg class="i16"><use href="#star"/></svg>Quick access</li>
                  <li class="sub"><svg class="i16"><use href="#desk"/></svg>Desktop<svg class="i10 tack"><use href="#tack"/></svg></li>
                  <li class="sub"><svg class="i16"><use href="#dl"/></svg>Downloads<svg class="i10 tack"><use href="#tack"/></svg></li>
                  <li class="sub"><svg class="i16"><use href="#docs"/></svg>Documents<svg class="i10 tack"><use href="#tack"/></svg></li>
                  <li class="sub"><svg class="i16"><use href="#pics"/></svg>Pictures<svg class="i10 tack"><use href="#tack"/></svg></li>
                  <li class="sub"><svg class="i16"><use href="#yfolder"/></svg>ExcelFiles</li>
                  <li class="sub"><svg class="i16"><use href="#yfolder"/></svg>ExcelFiles</li>
                  <li class="sub"><svg class="i16"><use href="#yfolder"/></svg>TestFiles</li>
                  <li class="sub"><svg class="i16"><use href="#yfolder"/></svg>TestFiles</li>
                  <li class="top"><svg class="i16"><use href="#cloud"/></svg>OneDrive</li>
                  <li class="top here"><svg class="i16"><use href="#pc"/></svg>This PC</li>
                  <li class="top"><svg class="i16"><use href="#netw"/></svg>Network</li>
                </ul>
                <table class="files">
                  <colgroup><col class="c1"><col class="c2"><col class="c2"><col class="c4"></colgroup>
                  <thead><tr><th>Name<svg class="i10 sort"><use href="#up"/></svg></th><th>Date modified</th><th>Type</th><th>Size</th></tr></thead>
                  <tbody><tr><td><svg><use href="#file"/></svg>NameMapping.tcNM</td><td>05/05/2017 02:16</td><td>TCNM File</td><td>1,068 KB</td></tr></tbody>
                </table>
              </div>
              <footer class="exstatus"><span>1 item</span><span>1 item selected  1.04 MB</span><button class="view on" aria-label="Details"><svg><use href="#details"/></svg></button><button class="view" aria-label="Thumbnails"><svg><use href="#pics"/></svg></button></footer>
            </div>
            <div class="activate"><p>Activate Windows</p><p>Go to Settings to activate Windows.</p></div>
          </div>
          <footer class="rdpstatus"><span class="cell">Connected to ETRM server</span><span class="cell">TEST Environment 17.1</span><span class="cell who"><svg><use href="#user"/></svg>Vizard</span>
            <svg class="graph" viewBox="0 0 72 25"><path d="M.5.500h71v24H.500z" fill="#fff" stroke="#888"/><path d="M2 2h68v21H2z"/><path d="M5 12.500h62M11.500 5v15M36.500 5v15M61.500 5v15" stroke="#00a000"/></svg></footer>
          <div class="taskbar inner">
            <button aria-label="Start"><svg class="i16"><use href="#win"/></svg></button>
            <label class="cortana"><i></i><input type="text" placeholder="Type here to search" aria-label="Type here to search"><svg class="mic"><use href="#mic"/></svg></label>
            <button aria-label="Task View"><svg class="tv"><use href="#taskview"/></svg></button>
            <button aria-label="Edge"><svg class="i24"><use href="#edge"/></svg></button>
            <button class="run active" aria-label="File Explorer"><svg class="i24"><use href="#explorer"/></svg></button>
            <button aria-label="Store"><svg class="i24"><use href="#store"/></svg></button>
            <button class="run" aria-label="Application"><svg class="i24"><use href="#app"/></svg></button>
            <button class="run multi" aria-label="Internet Explorer"><svg class="i24"><use href="#ie"/></svg></button>
            <button class="run" aria-label="NUnit"><span class="nu"><b>N</b><b>U</b></span></button>
            <button class="run" aria-label="Command Prompt"><svg class="i24"><use href="#cmd"/></svg></button>
            <button class="run teal" aria-label="Brady ETRM"><svg class="i24"><use href="#brady"/></svg></button>
            <button class="run" aria-label="Notepad++"><svg class="i24"><use href="#npp"/></svg></button>
            <div class="tray"><svg class="i16 caret"><use href="#up"/></svg><svg class="i16"><use href="#tc"/></svg><svg class="i16"><use href="#key"/></svg><svg class="i16"><use href="#net"/></svg><svg class="i16"><use href="#sound"/></svg><time class="clock">11:39<br>05/05/2017</time><span class="bell"><svg class="i16"><use href="#notif"/></svg><em>1</em></span></div>
          </div>
        </div>
      </div>
    </div>
    <footer class="rstatus"><svg class="i16"><use href="#info"/></svg><span>11:22:56 Connected to NETVM-QA163C02</span><svg class="bulb lit"><use href="#bulb"/></svg><span>2 of 74</span><svg class="lic"><use href="#license"/></svg><span>Standard License</span><svg class="i10"><use href="#grip"/></svg></footer>
  </div>
</section>
</main>
</body>
</html>
```
FILE: styles.css
```css
* { box-sizing: border-box; }
body { margin: 0; font: 11px/16px "Open Sans", "Noto Sans", sans-serif; color: #111; background: #101010; }
button, input, select { font: inherit; color: inherit; background: none; border: 0; padding: 0; margin: 0; border-radius: 0; }
h1, h2, h3, p, ul, ol { margin: 0; padding: 0; font-weight: 400; font-size: inherit; list-style: none; }
a { color: inherit; text-decoration: none; }
svg { display: block; flex: none; }
.defs { position: absolute; width: 0; height: 0; }
.i8 { width: 8px; height: 8px; }
.i10 { width: 10px; height: 10px; }
.i12 { width: 12px; height: 12px; }
.i14 { width: 14px; height: 14px; }
.i16 { width: 16px; height: 16px; }
.i24 { width: 24px; height: 24px; }
.sky { color: #7aa6c8; }
.teal { color: #0a9393; }
.live { --fill: #c9f5bd; }

.desktop { display: grid; grid-template-columns: 1fr 1fr; height: 100vh; overflow: hidden; }
.monitor { position: relative; display: flex; flex-direction: column; min-width: 0; overflow: hidden; }

/* shared window parts */
.titlebar { display: flex; align-items: center; gap: 5px; height: 23px; padding-left: 2px; background: #fff; color: #000; }
.titlebar.dim { color: #999; }
.winbtns { display: flex; margin-left: auto; align-self: flex-start; }
.winbtns button { width: 46px; height: 21px; display: grid; place-items: center; }
.winbtns svg { width: 10px; height: 10px; }
.menu { display: flex; align-items: center; height: 24px; padding-left: 5px; background: linear-gradient(90deg, #f0f0f0, #fdfdfd); color: #000; }
.menu button { padding: 0 10px; }
.dots { width: 2px; height: 16px; background: repeating-linear-gradient(#bbb 0 2px, transparent 2px 5px); }
.rule { width: 1px; height: 14px; background: #bbb; }
.rule.tall { height: 24px; background: #c4c4c4; }

/* data manager */
.primary { background: #f0f0f0; }
.toolbar { display: flex; align-items: center; height: 25px; padding-left: 6px; gap: 4px; background: linear-gradient(90deg, #f4f4f4, #f0f0f0); }
.toolbar .dots { margin-right: 2px; }
.toolbar .rule { margin: 0 2px 0 4px; }
.toolbar .rule.tall { margin: 0 0 0 3px; }
.royalblue { color: #2a5cc0; }
.toolbar .draw { display: flex; align-items: center; gap: 3px; margin-right: 4px; color: #000; }
.swatch { width: 40px; height: 18px; background: #d8e4f2; margin-right: 2px; }
.combo { position: relative; width: 65px; height: 23px; margin-right: 8px; }
.combo select { width: 100%; height: 100%; appearance: none; border: 1px solid #a8a8a8; padding-left: 3px; color: #777; opacity: 1; }
.combo svg { position: absolute; right: 4px; top: 8px; width: 6px; height: 6px; color: #555; }
.workspace { flex: 1; background: #ababab; border: 1px solid #696969; border-width: 2px 0 0 1px; margin-right: 2px; }
.dmstatus { display: flex; gap: 2px; height: 27px; padding: 4px 0 3px 1px; border-top: 2px solid #fff; background: #f0f0f0; }
.dmstatus .cell, .rdpstatus .cell { display: flex; align-items: center; border: 1px solid; border-color: #9a9a9a #fff #fff #9a9a9a; }
.dmstatus .cell { padding: 0 15px; }
.dmstatus .cell:first-child { padding: 0 13px; }

.taskbar { display: flex; height: 40px; background: #101010; color: #fff; }
.taskbar > button { position: relative; width: 48px; height: 40px; display: grid; place-items: center; }
.taskbar > button:nth-of-type(n+4), .inner > button:nth-of-type(n+2) { margin-left: 1px; }
.tv { width: 20px; height: 16px; }
.run::after { content: ""; position: absolute; left: 4px; right: 4px; bottom: 0; height: 2px; background: #87aad8; }
.run.multi::after { background: linear-gradient(90deg, #87aad8 32px, #5c7696 32px); }
.run.active { background: #353535; }
.run.active::after { left: 0; right: 0; }
.taskbar .sky { color: #7aa6c8; }
.taskbar .teal { color: #0a9393; }
.mailbadge { position: absolute; right: 8px; bottom: 6px; width: 14px; height: 12px; }
.tray { display: flex; align-items: center; gap: 8px; margin-left: auto; padding-right: 11px; margin-right: 4px; border-right: 1px solid #555; }
.lang { margin-right: 8px; color: #e8e8e8; }
.caret { padding: 2px; }
.clock { text-align: center; line-height: 17px; margin-left: 6px; white-space: nowrap; }

.playback { position: absolute; right: 18px; top: 24px; display: flex; width: 103px; height: 41px; border: 1px solid #a09c94; border-radius: 4px; background: #d4d2cd; }
.tclogo { flex: 1; display: grid; place-items: center; }
.tclogo svg { width: 32px; height: 32px; }
.deck { display: flex; align-items: center; justify-content: center; gap: 3px; width: 61px; height: 37px; background: #141414; border-top-right-radius: 4px; }
.deck button { width: 22px; height: 22px; border-radius: 3px; background: linear-gradient(#eceae6, #b8b4ac); display: grid; place-items: center; border: 1px solid #f0f0f0; }
.pause { width: 8px; height: 8px; border: solid #444; border-width: 0 3px; }
.stop { width: 8px; height: 8px; background: #444; }
.hint { position: absolute; right: 18px; top: 68px; width: 62px; height: 43px; background: #fff; border: 1px solid #777; padding: 2px 3px; text-align: right; color: #000; }
.hint span { display: block; padding-right: 3px; }
.hint span:first-child { border-bottom: 1px solid #000; height: 18px; }
.cursor { position: absolute; left: 937px; top: 363px; width: 11px; height: 17px; }

/* wallpaper */
.secondary {
  background:
    linear-gradient(#06150a 0, #051003 590px, #6b2f62 660px, #8a4f86 760px, #9a5c98 860px, #5a3050 960px, #26341a 1080px, #4a3340 1163px) right top / 16px 1163px no-repeat,
    linear-gradient(#47253f 0, #5a3350 90px, #2c3c14 190px, #243a14 370px, #7a5a68 440px, #b885b5 530px, #c98fb0 570px, #5a9440 640px, #5f8015 670px, #8a6a5a 700px, #5fa04a 760px, #4a9030 860px, #24480c 960px, #16300c 1030px, #4a7a30 1100px, #3c6a24 1163px) left top / 22px 1163px no-repeat,
    linear-gradient(90deg, #3b6a2c 0, #2f6a34 100px, #5d7a4c 180px, #b0a884 230px, #a09a78 275px, #8e5682 325px, #4c3f48 385px, #2a5a1e 450px, #2a5518 580px, #5a6420 640px, #a04f50 730px, #6c5030 820px, #6a9a50 880px, #c8c090 960px, #d08070 1060px, #a05a58 1160px, #8fbc75 1290px, #6aa04a 1400px, #8a8060 1500px, #1f3f14 1570px, #1a2a10 1700px, #4a3340 1880px, #3a2833 1920px);
}
.note { position: absolute; right: 16px; top: 53px; width: 12px; height: 646px; background: linear-gradient(#f5f0ae 28px, #fff8ae 28px); }

/* royal ts */
.royal { position: absolute; inset: 0 24px 37px 22px; display: flex; flex-direction: column; background: #f3f3f3; border: 1px solid #5c585e; color: #333; }
.context { position: absolute; left: 422px; top: 0; width: 168px; height: 52px; background: #eff7e1; border-top: 4px solid #a4cf48; text-align: center; padding-top: 4px; color: #555; z-index: 0; }
.rtitle { display: grid; grid-template-columns: 1fr auto 1fr; align-items: center; height: 31px; }
.rtitle h2 { font-size: 12px; color: #888; }
.qat { display: flex; align-items: center; gap: 12px; padding-left: 6px; color: #666; }
.rbtns { display: flex; justify-content: flex-end; gap: 17px; padding-right: 13px; }
.rbtns svg { width: 14px; height: 14px; }
.rtabs { position: relative; display: flex; height: 24px; font-size: 12px; background: linear-gradient(#c6c6c6, #c6c6c6) left bottom / 100% 1px no-repeat; color: #444; }
.rtabs button { padding: 0 12px 0 13px; }
.rtabs .filetab { width: 57px; background: #834f00; color: #fff; margin-right: 4px; padding: 0; }
.rtabs .on { width: 76px; margin-left: 2px; padding: 0; border: 1px solid #c6c6c6; border-bottom: 0; background: #f3f3f3; color: #834f00; }
.rtabs .rhelp { margin-left: auto; padding-right: 6px; color: #2f6bb4; }
.ribbon { display: flex; height: 99px; border-bottom: 1px solid #c0c0c0; padding: 6px 0; }
.group { display: flex; flex-direction: column; border-right: 1px solid #d4d4d4; padding: 0 10px; }
.g-common { width: 282px; } .g-clip { width: 257px; } .g-tasks { width: 262px; } .g-resize { width: 122px; } .g-input { width: 117px; } .g-remote { width: 280px; } .g-zoom { width: 134px; }
.cmds { display: flex; justify-content: space-between; flex: 1; min-height: 0; }
.gname { text-align: center; line-height: 12px; color: #444; }
.big { display: flex; flex-direction: column; align-items: center; min-width: 32px; line-height: 15px; white-space: nowrap; }
.big > svg { width: 32px; height: 32px; margin-bottom: 5px; }
.big.start { color: #2f8fc4; }
.big.start span { color: #333; }
.big .dd { display: inline-block; vertical-align: middle; }
.dd { width: 6px; height: 6px; color: #777; }
.g-common { padding-left: 12px; }
.g-common .cmds { justify-content: flex-start; }
.stack { display: flex; flex-direction: column; gap: 3px; padding: 0 10px 3px 0; }
.stack button { display: flex; align-items: center; gap: 5px; height: 20px; white-space: nowrap; padding: 0; margin-top: -1px; margin-bottom: 1px; }
.stack .dd { margin-left: -1px; }
.stack.second { height: 70px; border-left: 1px solid #d8d8d8; padding-left: 9px; }
.stack button:disabled { color: #999; }
.collapse { margin: auto 10px 0 auto; }
.rbody { flex: 1; display: flex; gap: 5px; padding: 2px 3px 1px 1px; min-height: 0; }

.navpane { width: 247px; display: flex; flex-direction: column; border: 1px solid #a0a0a0; padding: 1px; }
.navhead { display: flex; align-items: center; gap: 3px; height: 42px; padding: 0 11px 4px 9px; color: #666; }
.navhead h3 { font-size: 15px; color: #444; }
.pin { width: 9px; height: 11px; margin: 0 12px 0 auto; }
.navsearch { display: flex; align-items: center; gap: 15px; height: 22px; padding-left: 8px; margin-bottom: 5px; }
.sbox { display: flex; align-items: center; width: 173px; height: 22px; border: 1px solid #a0a0a0; padding: 0 3px; color: #555; }
.sbox input, .find input { flex: 1; min-width: 0; outline: 0; }
::placeholder { color: #8a8a8a; opacity: 1; }
.bulb { width: 12px; height: 16px; --bulb: #fdfdfd; --rim: #666; margin: 0 2px; }
.bulb.lit { --bulb: #f0b350; --rim: #e9a94a; }
.treewrap { flex: 1; display: flex; min-height: 0; }
.tree { flex: 1; overflow: hidden; color: #333; --fill: #f3f3f3; }
.tree li { display: flex; align-items: center; height: 22px; white-space: nowrap; }
.root { padding-left: 7px; gap: 3px; } .root .ic { margin-right: 2px; }
.dir { padding-left: 25px; gap: 4px; } .dir .i8 { color: #555; }
.root .i8 { color: #555; }
.host { padding-left: 55px; font-size: 12px; gap: 3px; color: #333; }
.host svg { color: #a0a0a0; }
.host span { padding: 2px; }
.host.live svg { color: #3c9a44; }
.sel span { background: #ece3d8; }
.vscroll { display: flex; flex-direction: column; align-items: center; justify-content: space-between; width: 17px; padding: 4px 0; background: #e7e7e7; color: #606060; }
.vscroll i { width: 100%; height: 353px; background: #c4c4c4; margin: 4px 0 auto; }
.hscroll { display: flex; align-items: center; justify-content: space-between; height: 17px; padding: 0 4px; margin-right: 17px; background: #e7e7e7; color: #606060; }
.hscroll i { width: 183px; height: 100%; background: #c4c4c4; margin: 0 auto 0 5px; }

.session { flex: 1; display: flex; flex-direction: column; min-width: 0; }
.doctabs { display: flex; align-items: flex-end; height: 28px; border-bottom: 2px solid #808080; padding-right: 4px; }
.doctabs button { display: flex; align-items: center; gap: 3px; height: 24px; padding-left: 10px; background: #dfdfdf; border: 1px solid #999; border-bottom: 0; border-left: 0; color: #555; }
.t-dash { width: 119px; } .t-start { width: 147px; } .t-last { width: 164px; }
.doctabs .t-start svg { color: #2f6bb4; }
.doctabs .live svg { color: #3c9a44; }
.doctabs .t-on { width: 167px; height: 26px; background: #4d4d4d; border: 0; color: #fff; font-weight: 700; }
.doctabs .t-on .x { color: #ddd; margin-left: auto; margin-right: 9px; }
.doctabs .t-last { font-size: 12px; }
.doctabs .more { margin: 0 0 10px auto; color: #666; }
.rdp { flex: 1; display: flex; flex-direction: column; border: 1px solid #808080; border-top: 0; min-height: 0; }
.mdi { position: relative; flex: 1; background: #ababab; overflow: hidden; color: #111; }
.rdp .menu button { padding: 0 11px 0 10px; }

.contracts { position: absolute; left: 24px; top: 78px; width: 885px; height: 450px; border: 1px solid #4c5058; background: #dfe9f5; padding: 1px 4px 3px; display: flex; flex-direction: column; }
.contracts header { display: flex; align-items: center; justify-content: space-between; height: 20px; background: linear-gradient(#bfcddb, #ccd8e6); margin: 0 -3px; padding: 0 4px; }
.contracts header button { width: 17px; height: 16px; border: 1px solid #4a1a1a; border-radius: 2px; background: linear-gradient(#e0a090 45%, #b83c28 45%, #d06a50); color: #fff; font-weight: 700; line-height: 10px; }
.filter { display: flex; align-items: center; gap: 8px; height: 25px; padding-left: 4px; background: #f2f2f2; }
.gridbox { flex: 1; border: 1px solid #8a8a8a; border-top: 2px solid #777; background: #a4a4a4; display: flex; flex-direction: column; }
.deals { border-collapse: collapse; width: 100%; background: #fff; }
.deals th { height: 20px; padding: 0 3px; text-align: left; font-weight: 400; background: #f3f3f3; border-bottom: 1px solid #aaa; }
.deals td { height: 20px; padding: 0; border-bottom: 1px solid #e4e4e4; }
.deals tr:nth-child(odd) td { background: #ffffe1; }
.deals .hot td, .deals tbody tr:first-child td { background: #0078d7; }
.dealscroll { display: flex; align-items: center; height: 17px; margin-top: auto; padding-left: 5px; gap: 4px; background: #f0f0f0; color: #444; }
.dealscroll i { flex: 1; height: 100%; background: #cdcdcd; }
.contracts footer { height: 26px; line-height: 26px; background: #f0f0f0; padding-left: 2px; }

.notepad { position: absolute; left: 314px; top: 139px; width: 1084px; height: 692px; border: 1px solid #777; background: #fff; display: flex; flex-direction: column; box-shadow: 0 4px 14px rgba(0, 0, 0, .35); color: #222; }
.notepad header { height: 30px; color: #888; }
.notepad .winbtns { margin: 4px 0 0; justify-content: flex-end; }
.npmenu { height: 20px; text-align: right; padding: 2px 8px 0; color: #777; border-bottom: 2px solid #ececec; }
.npbar { height: 25px; border-bottom: 1px solid #ddd; }
.nptabs { height: 27px; background: #f0f0f0; }
.editor { flex: 1; display: flex; min-height: 0; border: 1px solid #888; border-top: 2px solid #666; margin: 0 3px 1px 1px; }
.code { flex: 1; display: flex; flex-direction: column; justify-content: space-between; background: linear-gradient(90deg, #e4e4e4 49px, #fff 49px); font: 13px/16px "Liberation Mono", "Courier New", monospace; overflow: hidden; }
.current { height: 16px; background: #e8e8ff; margin: 0 2px 0 50px; }
.code li { display: flex; height: 16px; }
.code b { width: 50px; padding-right: 20px; text-align: right; font-weight: 400; color: #888; }
.code code { font: inherit; white-space: pre; background: #c0c0c0; padding-right: 8px; }
.code .blank { width: 8px; }
.code .long { width: 857px; text-align: right; }
.editor .vscroll { background: #f0f0f0; width: 16px; }
.editor .vscroll i { height: 87px; background: #cdcdcd; }
.notepad footer { display: flex; height: 24px; align-items: center; background: #f0f0f0; border-top: 1px solid #888; white-space: pre; }
.notepad footer span { border-right: 1px solid #d7d7d7; padding-left: 3px; line-height: 20px; }
.f-type { width: 343px; } .f-len { width: 200px; } .f-pos { width: 260px; } .f-eol { width: 110px; } .f-enc { width: 120px; } .f-ins { width: 30px; }
.notepad footer svg { margin: auto 2px 2px auto; color: #bbb; }

.explorer { position: absolute; left: 68px; top: 101px; width: 1126px; height: 593px; border: 1px solid #1a7fd4; background: #fff; display: flex; flex-direction: column; box-shadow: 0 6px 18px rgba(0, 0, 0, .4); }
.extitle { display: flex; align-items: center; gap: 6px; height: 30px; padding-left: 9px; color: #000; }
.extitle i { width: 1px; height: 12px; background: #888; margin: 0 2px; }
.explorer .winbtns button { height: 28px; }
.extabs { display: flex; height: 24px; border-bottom: 1px solid #dadada; color: #444; }
.extabs button { padding: 0 14px; }
.extabs .filetab { width: 56px; background: #1979ca; color: #fff; padding: 0; }
.exhelp { display: flex; align-items: center; gap: 11px; margin-left: auto; padding-right: 5px; color: #999; }
.q { color: #0078d7; }
.exaddr { display: flex; align-items: center; height: 34px; padding-left: 13px; color: #555; }
.exaddr > button { margin-right: 15px; }
.exaddr > .small { margin-right: 10px; }
.exaddr > button:nth-child(4) { margin-right: 6px; }
.arr { width: 14px; height: 12px; }
.off { color: #ccc; }
.path { flex: 1; display: flex; align-items: center; height: 22px; border: 1px solid #d9d9d9; padding-left: 3px; color: #111; }
.path span { margin: 0 8px 0 4px; color: #555; }
.path a::after { content: "›"; display: inline-block; width: 23px; text-align: center; color: #666; }
.path a:last-of-type::after { content: none; }
.pd { margin: 0 5px 0 auto; color: #555; }
.path button { width: 20px; height: 20px; display: grid; place-items: center; border-left: 1px solid #d9d9d9; }
.find { display: flex; align-items: center; width: 202px; height: 22px; border: 1px solid #d9d9d9; margin: 0 12px; padding: 0 8px; color: #666; }
.exbody { flex: 1; display: flex; min-height: 0; }
.places { width: 159px; border-right: 1px solid #f0f0f0; padding-top: 17px; color: #111; }
.places li { display: flex; align-items: center; gap: 5px; height: 24px; padding-left: 24px; margin-right: 2px; }
.places .sub { padding-left: 32px; }
.places .top { margin-top: 8px; }
.places .here { background: #d9d9d9; }
.tack { margin: 0 3px 0 auto; }
.files { table-layout: fixed; width: 577px; margin-left: 15px; align-self: flex-start; border-collapse: separate; border-spacing: 0; color: #6d6d6d; }
.c1 { width: 258px; } .c2 { width: 120px; }
.files th { position: relative; height: 26px; padding: 2px 6px 0; text-align: left; font-weight: 400; color: #4c607a; border-right: 1px solid #e5e5e5; }
.files th:first-child { padding-left: 3px; }
.sort { position: absolute; left: 122px; top: -1px; color: #666; }
.files tbody::before { content: ""; display: block; height: 6px; }
.files td { height: 22px; padding: 0 6px; background: #cce8ff; border: solid #99d1ff; border-width: 1px 0; }
.files td:first-child { display: flex; align-items: center; gap: 6px; border-left-width: 1px; color: #000; }
.files td:last-child { text-align: right; border-right-width: 1px; }
.files td svg { width: 12px; height: 16px; }
.exstatus { display: flex; align-items: center; height: 24px; padding-left: 14px; color: #1e395b; white-space: pre; }
.exstatus span { padding-right: 11px; margin-right: 10px; border-right: 1px solid #e4e4e4; line-height: 14px; }
.view { width: 22px; height: 24px; display: grid; place-items: center; }
.view svg { width: 16px; height: 13px; }
.view.on { margin-left: auto; border: 1px solid #26a0da; background: #cbe8f6; }
.exstatus .view:last-child { width: 26px; }
.activate { position: absolute; left: 1310px; top: 776px; color: rgba(160, 160, 160, .65); font-size: 14px; line-height: 20px; }
.activate p:first-child { font-size: 19px; line-height: 25px; }

.rdpstatus { display: flex; gap: 1px; height: 30px; padding: 3px 22px 4px 1px; border-top: 1px solid #fff; border-bottom: 1px solid #aaa; background: #f0f0f0; color: #111; }
.rdpstatus .cell { padding: 0 5px; }
.rdpstatus .who { padding: 0 4px 0 1px; gap: 3px; }
.who svg { width: 16px; height: 18px; }
.graph { width: 72px; height: 25px; margin-left: auto; }
.inner { background: #01040a; }
.inner .run.active { background: #393b40; }
.cortana { display: flex; align-items: center; gap: 5px; width: 343px; background: #333; padding: 0 15px 0 9px; font-size: 14px; }
.cortana i { width: 22px; height: 22px; border: 3px solid #fff; border-radius: 50%; }
.cortana input { flex: 1; }
.cortana ::placeholder { color: #9a9a9a; }
.mic { width: 12px; height: 18px; color: #aaa; }
.nu { width: 24px; height: 20px; background: #fff; font: 700 18px/20px "Liberation Serif", serif; display: flex; }
.nu b:first-child { color: #00d800; }
.nu b:last-child { color: #e00000; font-size: 15px; line-height: 26px; }
.inner .tray { padding-right: 19px; }
.bell { position: relative; margin-left: 9px; }
.bell em { position: absolute; left: 8px; top: 4px; width: 16px; height: 16px; border: 1px solid #888; border-radius: 50%; background: #333; font-style: normal; text-align: center; line-height: 14px; }
.rstatus { display: flex; align-items: center; gap: 5px; height: 24px; padding: 0 1px 0 7px; background: #834f00; color: #fff; }
.rstatus .bulb { margin-left: auto; }
.lic { width: 12px; height: 16px; margin: 0 2px 0 6px; }
.rstatus .i10 { align-self: flex-end; margin: 0 0 2px 24px; color: #c8b090; }
```
